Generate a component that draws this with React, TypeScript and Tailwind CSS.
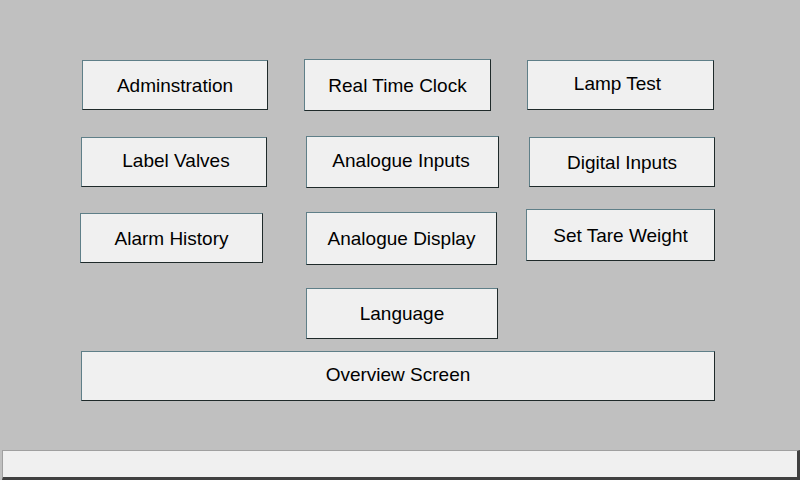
import React from 'react'

const btn =
  "flex items-center justify-center bg-[#f0f0f0] border border-t-[#5f7f88] border-l-[#5f7f88] border-b-[#1f2a2a] border-r-[#1f2a2a] text-[19px] text-black leading-none"

const App = () => {
  return (
    <div
      className="w-[800px] h-[480px] bg-[#c0c0c0] flex flex-col overflow-hidden"
      style={{ fontFamily: '"Liberation Sans", Arial, sans-serif' }}
    >
      {/* row 1 */}
      <div className="flex items-start h-[52px] mt-[59px]">
        <div className={`${btn} ml-[82px] mt-[1px] w-[186px] h-[50px]`}>Adminstration</div>
        <div className={`${btn} ml-[36px] w-[187px] h-[52px]`}>Real Time Clock</div>
        <div className={`${btn} ml-[36px] mt-[1px] w-[187px] h-[50px] pb-[4px] pr-[6px] border-t-[#2e8b8b] border-l-[#2e8b8b]`}>
          Lamp Test
        </div>
      </div>

      {/* row 2 */}
      <div className="flex items-start h-[52px] mt-[25px]">
        <div className={`${btn} ml-[81px] mt-[1px] w-[186px] h-[50px] pb-[4px] pl-[4px]`}>Label Valves</div>
        <div className={`${btn} ml-[39px] w-[193px] h-[52px] pb-[4px] pr-[3px]`}>Analogue Inputs</div>
        <div className={`${btn} ml-[30px] mt-[1px] w-[186px] h-[50px]`}>Digital Inputs</div>
      </div>

      {/* row 3 */}
      <div className="flex items-start h-[56px] mt-[21px]">
        <div className={`${btn} ml-[80px] mt-[4px] w-[183px] h-[50px]`}>Alarm History</div>
        <div className={`${btn} ml-[43px] mt-[3px] w-[191px] h-[53px]`}>Analogue Display</div>
        <div className={`${btn} ml-[29px] w-[189px] h-[52px]`}>Set Tare Weight</div>
      </div>

      {/* row 4 */}
      <div className="flex items-start h-[51px] mt-[23px]">
        <div className={`${btn} ml-[306px] w-[192px] h-[51px]`}>Language</div>
      </div>

      {/* row 5 */}
      <div className="flex items-start h-[50px] mt-[12px]">
        <div className={`${btn} ml-[81px] w-[634px] h-[50px] pb-[4px]`}>Overview Screen</div>
      </div>

      <div className="flex-1" />

      {/* status bar */}
      <div className="ml-[2px] h-[30px] bg-[#f0f0f0] border-t border-l border-t-[#a0a0a0] border-l-[#a0a0a0] border-b-[3px] border-r-[3px] border-b-[#404040] border-r-[#404040]" />
    </div>
  )
}

export default App
